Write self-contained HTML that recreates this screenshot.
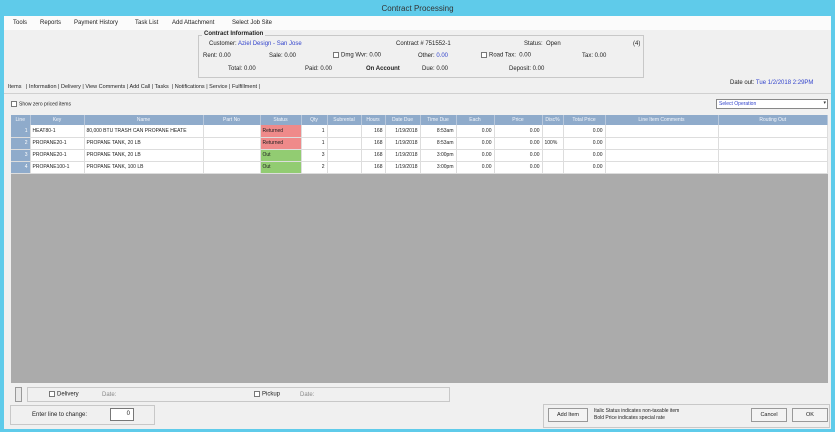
<!DOCTYPE html>
<html><head><style>
*{margin:0;padding:0;box-sizing:border-box}
body{width:835px;height:432px;overflow:hidden;background:#5fcbea;font-family:"Liberation Sans",sans-serif;font-size:6px;color:#222;position:relative}
.a{position:absolute;white-space:nowrap}
#win{position:absolute;left:4px;top:16px;width:827px;height:413px;background:#f0f0f0}
.menu{position:absolute;left:0;top:0;width:827px;height:14px;background:#fbfbfb}
.blue{color:#3344cc}
.grp{position:absolute;border:1px solid #c8c8c8}
table{border-collapse:collapse;position:absolute;left:7px;top:99px;width:817px;table-layout:fixed}
th{background:#8fabcb;color:#f4f6fa;font-weight:normal;font-size:5px;height:10px;border-right:1px solid #b8c8dc}
td{height:12px;font-size:5px;border-right:1px solid #ddd;border-bottom:1px solid #ddd;background:#fff;padding:0 2px;overflow:hidden;white-space:nowrap}
td.n{background:#8fabcb;color:#fff;text-align:right}
td.r{text-align:right}
.red{background:#ef8a8a!important}
.grn{background:#92cc72!important}
.cb{display:inline-block;width:6px;height:6px;border:1px solid #777;background:#fff;vertical-align:middle;margin-right:2px}
.btn{position:absolute;border:1px solid #999;background:#f3f3f3;font-size:5.5px;text-align:center;line-height:13px}
</style></head><body>
<div class="a" style="left:0;top:4px;width:835px;text-align:center;font-size:8px;color:#333">Contract Processing</div>
<div id="win">
<div class="menu"></div>
<div class="a" style="left:9px;top:4px">Tools</div>
<div class="a" style="left:36px;top:4px">Reports</div>
<div class="a" style="left:70px;top:4px">Payment History</div>
<div class="a" style="left:131px;top:4px">Task List</div>
<div class="a" style="left:168px;top:4px">Add Attachment</div>
<div class="a" style="left:228px;top:4px">Select Job Site</div>
<div class="grp" style="left:194px;top:19px;width:446px;height:43px"></div>
<div class="a" style="left:198px;top:15px;font-weight:bold;background:#f0f0f0;padding:0 2px">Contract Information</div>
<div class="a" style="left:205px;top:25px">Customer: <span class="blue">Aziel Design - San Jose</span></div>
<div class="a" style="left:392px;top:25px">Contract # 751552-1</div>
<div class="a" style="left:520px;top:25px">Status:&nbsp; Open</div>
<div class="a" style="left:629px;top:25px">(4)</div>
<div class="a" style="left:199px;top:37px">Rent: 0.00</div>
<div class="a" style="left:265px;top:37px">Sale: 0.00</div>
<div class="a" style="left:329px;top:36px"><span class="cb"></span>Dmg Wvr: 0.00</div>
<div class="a" style="left:414px;top:37px">Other: <span class="blue">0.00</span></div>
<div class="a" style="left:477px;top:36px"><span class="cb"></span>Road Tax:&nbsp; 0.00</div>
<div class="a" style="left:578px;top:37px">Tax: 0.00</div>
<div class="a" style="left:224px;top:50px">Total: 0.00</div>
<div class="a" style="left:301px;top:50px">Paid: 0.00</div>
<div class="a" style="left:362px;top:50px;font-weight:bold">On Account</div>
<div class="a" style="left:418px;top:50px">Due: 0.00</div>
<div class="a" style="left:505px;top:50px">Deposit: 0.00</div>
<div class="a" style="left:726px;top:64px">Date out: <span class="blue">Tue 1/2/2018 2:29PM</span></div>
<div class="a" style="left:4px;top:68px;font-size:5.5px">Items&nbsp;&nbsp; | Information | Delivery | View Comments | Add Call | Tasks &nbsp;| Notifications | Service | Fulfillment |</div>
<div class="a" style="left:0;top:77px;width:827px;border-top:1px solid #d0d0d0"></div>
<div class="a" style="left:7px;top:85px;font-size:5px"><span class="cb"></span>Show zero priced items</div>
<div class="a" style="left:712px;top:83px;width:112px;height:10px;background:#fff;border:1px solid #888;color:#3344cc;font-size:5px;padding:1px 2px">Select Operation<span style="position:absolute;right:1px;top:0;color:#333">▾</span></div>
<div class="a" style="left:7px;top:99px;width:817px;height:268px;background:#ababab"></div>
<table>
<colgroup><col style="width:19px"><col style="width:54px"><col style="width:119px"><col style="width:57px"><col style="width:41px"><col style="width:26px"><col style="width:34px"><col style="width:24px"><col style="width:35px"><col style="width:36px"><col style="width:38px"><col style="width:48px"><col style="width:21px"><col style="width:42px"><col style="width:113px"><col></colgroup>
<tr><th>Line</th><th>Key</th><th>Name</th><th>Part No</th><th>Status</th><th>Qty</th><th>Subrental</th><th>Hours</th><th>Date Due</th><th>Time Due</th><th>Each</th><th>Price</th><th>Disc%</th><th>Total Price</th><th>Line Item Comments</th><th>Routing Out</th></tr>
<tr><td class="n">1</td><td>HEAT80-1</td><td>80,000 BTU TRASH CAN PROPANE HEATE</td><td></td><td class="red">Returned</td><td class="r">1</td><td></td><td class="r">168</td><td class="r">1/19/2018</td><td class="r">8:53am</td><td class="r">0.00</td><td class="r">0.00</td><td></td><td class="r">0.00</td><td></td><td></td></tr>
<tr><td class="n">2</td><td>PROPANE20-1</td><td>PROPANE TANK, 20 LB</td><td></td><td class="red">Returned</td><td class="r">1</td><td></td><td class="r">168</td><td class="r">1/19/2018</td><td class="r">8:53am</td><td class="r">0.00</td><td class="r">0.00</td><td>100%</td><td class="r">0.00</td><td></td><td></td></tr>
<tr><td class="n">3</td><td>PROPANE20-1</td><td>PROPANE TANK, 20 LB</td><td></td><td class="grn">Out</td><td class="r">3</td><td></td><td class="r">168</td><td class="r">1/19/2018</td><td class="r">3:00pm</td><td class="r">0.00</td><td class="r">0.00</td><td></td><td class="r">0.00</td><td></td><td></td></tr>
<tr><td class="n">4</td><td>PROPANE100-1</td><td>PROPANE TANK, 100 LB</td><td></td><td class="grn">Out</td><td class="r">2</td><td></td><td class="r">168</td><td class="r">1/19/2018</td><td class="r">3:00pm</td><td class="r">0.00</td><td class="r">0.00</td><td></td><td class="r">0.00</td><td></td><td></td></tr>
</table>
<div class="a" style="left:11px;top:371px;width:7px;height:15px;border:1px solid #999;background:#e8e8e8"></div>
<div class="grp" style="left:23px;top:371px;width:423px;height:15px"></div>
<div class="a" style="left:45px;top:375px"><span class="cb"></span>Delivery</div>
<div class="a" style="left:98px;top:376px;color:#888">Date:</div>
<div class="a" style="left:250px;top:375px"><span class="cb"></span>Pickup</div>
<div class="a" style="left:296px;top:376px;color:#888">Date:</div>
<div class="grp" style="left:6px;top:389px;width:145px;height:20px"></div>
<div class="a" style="left:28px;top:396px">Enter line to change:</div>
<div class="a" style="left:106px;top:392px;width:24px;height:13px;background:#fff;border:1px solid #777;text-align:right;padding:2px 3px">0</div>
<div class="grp" style="left:539px;top:388px;width:287px;height:24px"></div>
<div class="btn" style="left:544px;top:392px;width:40px;height:14px">Add Item</div>
<div class="a" style="left:590px;top:392px;font-size:5px;line-height:7px">Italic Status indicates non-taxable item<br>Bold Price indicates special rate</div>
<div class="btn" style="left:747px;top:392px;width:36px;height:14px">Cancel</div>
<div class="btn" style="left:788px;top:392px;width:36px;height:14px">OK</div>
</div>
</body></html>
